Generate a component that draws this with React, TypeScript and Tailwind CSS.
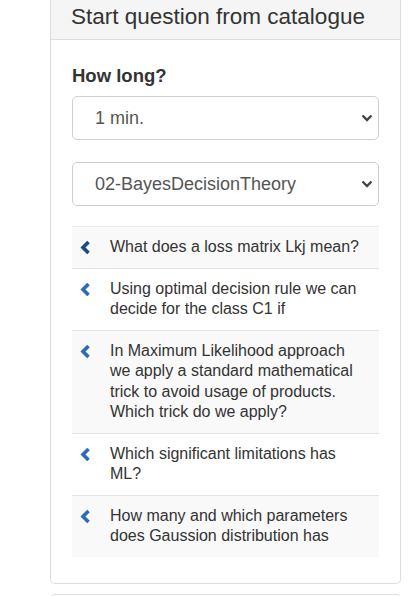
const QUESTIONS = [
  "What does a loss matrix Lkj mean?",
  "Using optimal decision rule we can decide for the class C1 if",
  "In Maximum Likelihood approach we apply a standard mathematical trick to avoid usage of products. Which trick do we apply?",
  "Which significant limitations has ML?",
  "How many and which parameters does Gaussion distribution has",
];

function SelectChevron() {
  return (
    <svg width="12" height="8" viewBox="0 0 12 8" className="shrink-0">
      <polyline points="1.5,1.5 6,6 10.5,1.5" fill="none" stroke="#444" strokeWidth="2.4" />
    </svg>
  );
}

function ItemChevron({ active }: { active: boolean }) {
  return (
    <svg width="11" height="15" viewBox="0 0 11 15" className="mt-[3px] shrink-0">
      <polyline
        points="8.5,2 3,7.5 8.5,13"
        fill="none"
        stroke={active ? "#1d4a80" : "#2b6cb5"}
        strokeWidth="3.6"
      />
    </svg>
  );
}

function FakeSelect({ value }: { value: string }) {
  return (
    <div className="flex h-[44px] items-center justify-between rounded-[5px] border border-[#cfcfcf] bg-white pl-[22px] pr-[5px] text-[18px] text-[#555]">
      <span>{value}</span>
      <SelectChevron />
    </div>
  );
}

export default function App() {
  return (
    <div className="min-h-screen bg-white font-['Liberation_Sans',Arial,sans-serif]">
      <div className="ml-[50px] w-[351px]">
        {/* Panel */}
        <div className="rounded-b-[5px] border-x border-b border-[#ddd]">
          <div className="h-[40px] border-b border-[#ddd] bg-[#f5f5f5] px-[20px] pt-[4px] text-[22.5px] leading-[25px] text-[#333]">
            Start question from catalogue
          </div>

          <div className="px-[21px] pt-[26px] pb-[26px]">
            <div className="mb-[10px] text-[18.5px] font-bold leading-[20px] text-[#333]">How long?</div>
            <FakeSelect value="1 min." />
            <div className="mt-[22px]">
              <FakeSelect value="02-BayesDecisionTheory" />
            </div>

            <div className="mt-[20px]">
              {QUESTIONS.map((q, i) => (
                <div
                  key={q}
                  className={`flex gap-[19px] border-t border-[#e3e3e3] py-[10px] pl-[8px] pr-[12px] ${
                    i % 2 === 0 ? "bg-[#f9f9f9]" : "bg-white"
                  } ${i === 0 ? "border-[#ebebeb]" : ""}`}
                >
                  <ItemChevron active={i === 0} />
                  <span className="text-[16px] leading-[20.5px] text-[#333]">{q}</span>
                </div>
              ))}
            </div>
          </div>
        </div>

        {/* Next panel, mostly off screen */}
        <div className="mt-[10px] h-[40px] rounded-t-[5px] border-x border-t border-[#ddd]" />
      </div>
    </div>
  );
}
